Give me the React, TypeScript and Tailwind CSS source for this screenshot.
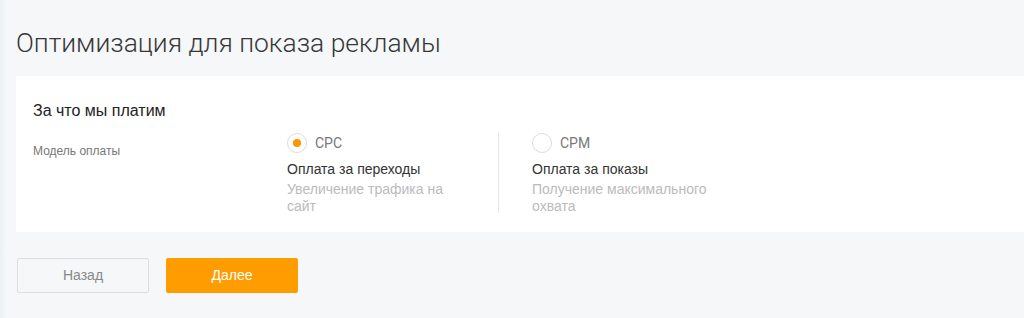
const options = [
  {
    id: 'cpc',
    code: 'CPC',
    title: 'Оплата за переходы',
    hint: 'Увеличение трафика на сайт',
    checked: true
  },
  {
    id: 'cpm',
    code: 'CPM',
    title: 'Оплата за показы',
    hint: 'Получение максимального охвата',
    checked: false
  }
];

function Radio({ checked }: { checked: boolean }) {
  return (
    <span className="flex h-5 w-5 shrink-0 items-center justify-center rounded-full border border-[#dcdcdc] bg-white">
      {checked && <span className="h-2 w-2 rounded-full bg-[#ff9500]" />}
    </span>
  );
}

export default function App() {
  return (
    <div className="flex h-[318px] w-full bg-[#f5f7f9] font-['Liberation_Sans',Arial,sans-serif]">
      {/* sidebar shadow */}
      <div className="w-[5px] shrink-0 bg-gradient-to-r from-[#eef1f3] to-[#f3f6f8]" />

      <main className="flex min-w-0 flex-1 flex-col pl-[11px]">
        <h1 className="pt-[28px] font-['Roboto',sans-serif] text-[26.4px] font-light leading-[30px] text-[#383838]">
          Оптимизация для показа рекламы
        </h1>

        <section className="mt-[18px] h-[156px] bg-white pl-[17px] pt-[25px]">
          <h2 className="text-[16px] leading-5 text-[#222]">За что мы платим</h2>

          <div className="mt-[12px] flex">
            <div className="w-[254px] shrink-0 pt-[10px] text-[12px] leading-4 text-[#777]">
              Модель оплаты
            </div>

            {options.map((opt, i) => (
              <div
                key={opt.id}
                className={
                  i === 0
                    ? 'w-[211px] shrink-0'
                    : 'h-[80px] shrink-0 border-l border-[#e6e6e6] pl-[33px]'
                }
              >
                <label className="flex h-5 items-center gap-[8px]">
                  <Radio checked={opt.checked} />
                  <span className="font-['Roboto',sans-serif] text-[14px] text-[#777]">{opt.code}</span>
                </label>
                <div className="mt-[7px] text-[14px] leading-[18px] text-[#333]">{opt.title}</div>
                <div className="mt-[3px] w-[180px] text-[14px] leading-[17px] text-[#bbb]">
                  {opt.hint}
                </div>
              </div>
            ))}
          </div>
        </section>

        <div className="ml-px mt-[26px] flex gap-[17px]">
          <button className="h-[35px] w-[132px] rounded-[2px] border border-[#dcdfe2] bg-[#f5f7f9] text-[14px] text-[#888]">
            Назад
          </button>
          <button className="h-[35px] w-[132px] rounded-[2px] bg-[#ff9d00] text-[14px] text-white">
            Далее
          </button>
        </div>
      </main>
    </div>
  );
}
